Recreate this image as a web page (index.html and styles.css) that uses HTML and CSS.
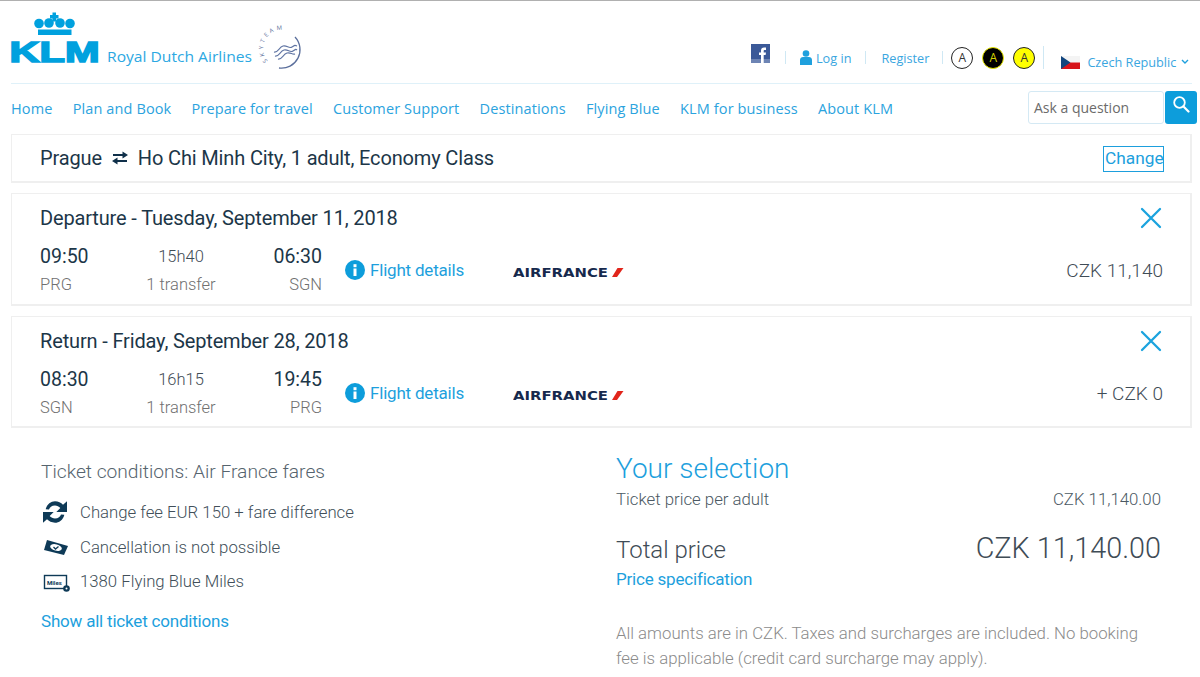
FILE: index.html
```html
<!DOCTYPE html>
<html lang="en">
<head>
<meta charset="utf-8">
<title>KLM - Your selection</title>
<link rel="stylesheet" href="styles.css">
</head>
<body>
<header class="top">
  <svg class="logo" width="292" height="64" viewBox="11 9 292 64">
    <g fill="#00a1de">
      <rect x="52.500" y="12.500" width="3.500" height="9"/><rect x="50" y="15" width="8.500" height="3.500"/>
      <circle cx="39" cy="23.500" r="4.800"/><circle cx="49" cy="23" r="4.800"/><circle cx="60" cy="23" r="4.800"/><circle cx="70" cy="23.500" r="4.800"/>
      <rect x="38" y="29.500" width="33.500" height="5.500"/>
      <text class="klm" x="9.500" y="62" textLength="90" lengthAdjust="spacingAndGlyphs">KLM</text>
      <text class="rda" x="107" y="62" textLength="145" lengthAdjust="spacingAndGlyphs">Royal Dutch Airlines</text>
    </g>
    <g class="skyteam">
      <path id="skyarc" d="M266 61 A18.500 18.500 0 0 1 294 36" fill="none"/>
      <text class="sky"><textPath href="#skyarc">SKYTEAM</textPath></text>
      <path d="M293 37 A18.500 18.500 0 0 1 277 68" fill="none" stroke="#5b6f9c" stroke-width="1.300"/>
      <g fill="none" stroke="#5f74a3" stroke-width="1.100">
        <path d="M272 52c4 1 5-5 9-6s6 3 9 1 3-2 5-1"/>
        <path d="M273 56c4 1 5-5 9-6s6 3 9 1 3-2 4-1"/>
        <path d="M276 59c4 1 5-5 9-6s5 2 8 1"/>
      </g>
    </g>
  </svg>
  <div class="util">
    <svg class="fb" width="19" height="19" viewBox="0 0 19 19"><rect width="19" height="19" fill="#3b5998"/><rect y="15" width="19" height="4" fill="#6d84b4"/><path d="M10 19v-8H8V8.500h2V6.500C10 4.500 11.200 3.500 13 3.500h2V6h-1.300c-.8 0-1 .4-1 1v1.500H15l-.4 2.500h-1.900v8z" fill="#fff"/></svg>
    <span class="sep"></span>
    <a class="ulink login"><svg width="12" height="15" viewBox="0 0 12 15"><circle cx="6" cy="3.500" r="3.300" fill="#1fa0dd"/><path d="M0 15V10c0-2 1.500-3 3-3h6c1.500 0 3 1 3 3v5z" fill="#1fa0dd"/></svg>Log in</a>
    <span class="sep sep-b"></span>
    <a class="ulink">Register</a>
    <span class="sep sep-c"></span>
    <span class="acc acc-w">A</span>
    <span class="acc acc-k">A</span>
    <span class="acc acc-y">A</span>
    <span class="sep sep-d"></span>
    <svg class="flag" width="19" height="13" viewBox="0 0 19 13"><rect width="19" height="6.500" fill="#f4f4f4"/><rect y="6.500" width="19" height="6.500" fill="#d7141a"/><path d="M0 0l9.500 6.500L0 13z" fill="#11457e"/></svg>
    <a class="ulink country">Czech Republic</a>
    <svg class="chev" width="8" height="5" viewBox="0 0 8 5"><path d="M1 1l3 3 3-3" fill="none" stroke="#1fa0dd" stroke-width="1.400"/></svg>
  </div>
</header>

<nav class="nav">
  <ul class="menu">
    <li>Home</li><li>Plan and Book</li><li>Prepare for travel</li><li>Customer Support</li><li>Destinations</li><li>Flying Blue</li><li>KLM for business</li><li>About KLM</li>
  </ul>
  <div class="search">
    <span class="sinput">Ask a question</span>
    <span class="sbtn"><svg width="18" height="18" viewBox="0 0 18 18"><circle cx="7.500" cy="7.500" r="5.300" fill="none" stroke="#fff" stroke-width="1.800"/><path d="M11.500 11.500l5 5" stroke="#fff" stroke-width="2.200" stroke-linecap="round"/></svg></span>
  </div>
</nav>

<main class="main">
  <section class="card summary">
    <div class="route">Prague
      <svg class="swap" width="18" height="18" viewBox="0 0 18 18"><path d="M2 6h10M16 12H6" fill="none" stroke="#10304a" stroke-width="2"/><path d="M11.500 2.500L17 6l-5.500 3.500zM6.500 8.500L1 12l5.500 3.500z" fill="#10304a"/></svg>
      Ho Chi Minh City, 1 adult, Economy Class</div>
    <a class="change">Change</a>
  </section>

  <section class="card flight">
    <div class="fhead"><h2>Departure - Tuesday, September 11, 2018</h2>
      <svg class="close" width="22" height="22" viewBox="0 0 22 22"><path d="M2 2l18 18M20 2L2 20" stroke="#1ba3de" stroke-width="2.300" stroke-linecap="round"/></svg></div>
    <div class="frow">
      <div class="col dep"><b>09:50</b><span>PRG</span></div>
      <div class="col dur"><i>15h40</i><span>1 transfer</span></div>
      <div class="col arr"><b>06:30</b><span>SGN</span></div>
      <a class="details"><svg width="20" height="20" viewBox="0 0 20 20"><circle cx="10" cy="10" r="10" fill="#0d9ddb"/><rect x="8.500" y="8.500" width="3" height="7.500" fill="#fff"/><rect x="8.500" y="4.200" width="3" height="3" fill="#fff"/></svg>Flight details</a>
      <svg class="af" width="111" height="12" viewBox="0 0 111 12"><text x="0" y="10" textLength="95" lengthAdjust="spacingAndGlyphs">AIRFRANCE</text><path d="M99 10L104.500 1H110.500L104 10z" fill="#e1251b"/></svg>
      <div class="price">CZK 11,140</div>
    </div>
  </section>

  <section class="card flight">
    <div class="fhead"><h2>Return - Friday, September 28, 2018</h2>
      <svg class="close" width="22" height="22" viewBox="0 0 22 22"><path d="M2 2l18 18M20 2L2 20" stroke="#1ba3de" stroke-width="2.300" stroke-linecap="round"/></svg></div>
    <div class="frow">
      <div class="col dep"><b>08:30</b><span>SGN</span></div>
      <div class="col dur"><i>16h15</i><span>1 transfer</span></div>
      <div class="col arr"><b>19:45</b><span>PRG</span></div>
      <a class="details"><svg width="20" height="20" viewBox="0 0 20 20"><circle cx="10" cy="10" r="10" fill="#0d9ddb"/><rect x="8.500" y="8.500" width="3" height="7.500" fill="#fff"/><rect x="8.500" y="4.200" width="3" height="3" fill="#fff"/></svg>Flight details</a>
      <svg class="af" width="111" height="12" viewBox="0 0 111 12"><text x="0" y="10" textLength="95" lengthAdjust="spacingAndGlyphs">AIRFRANCE</text><path d="M99 10L104.500 1H110.500L104 10z" fill="#e1251b"/></svg>
      <div class="price">+ CZK 0</div>
    </div>
  </section>

  <section class="bottom">
    <div class="conditions">
      <h3>Ticket conditions: Air France fares</h3>
      <ul class="clist">
        <li><svg width="24" height="24" viewBox="3 3 18 18"><path d="M5 10c1-4 4-6 7-6 2.500 0 4.500 1 6 2.500L21 4v8h-8l3-3c-1-1-2.500-1.800-4-1.800-2.500 0-4 1.300-4.500 3zM19 14c-1 4-4 6-7 6-2.500 0-4.500-1-6-2.500L3 20v-8h8l-3 3c1 1 2.500 1.800 4 1.800 2.500 0 4-1.300 4.500-3z" fill="#0e3a57"/></svg>Change fee EUR 150 + fare difference</li>
        <li><svg width="24" height="24" viewBox="0 0 24 24"><path d="M4 5l21 6-4 9-20-5z" fill="#0e3a57"/><ellipse cx="13" cy="12.500" rx="6" ry="3.200" fill="#fff" transform="rotate(15 13 12.500)"/><path d="M10.500 12l2 2 3-2.500" fill="none" stroke="#0e3a57" stroke-width="1.300"/></svg>Cancellation is not possible</li>
        <li><svg width="24" height="24" viewBox="0 0 24 24"><rect x="1.500" y="6.500" width="22" height="13" fill="#fff" stroke="#0e3a57" stroke-width="1.400"/><text class="miles" x="4" y="15.500">Miles</text><circle cx="23.500" cy="19.500" r="3.300" fill="#0e3a57"/><circle cx="23.500" cy="19.500" r="1" fill="#fff"/></svg>1380 Flying Blue Miles</li>
      </ul>
      <a class="more">Show all ticket conditions</a>
    </div>
    <div class="selection">
      <h3>Your selection</h3>
      <div class="line"><span>Ticket price per adult</span><span class="sm">CZK 11,140.00</span></div>
      <div class="total"><span>Total price</span><span class="big">CZK 11,140.00</span></div>
      <a class="spec">Price specification</a>
      <p class="note">All amounts are in CZK. Taxes and surcharges are included. No booking fee is applicable (credit card surcharge may apply).</p>
    </div>
  </section>
</main>
</body>
</html>
```
FILE: styles.css
```css
* { box-sizing: border-box; }
html, body { margin: 0; padding: 0; }
body {
  width: 1200px;
  height: 677px;
  overflow: hidden;
  background: #fff;
  border-top: 1px solid #b0b0b0;
  font-family: Roboto, "Liberation Sans", sans-serif;
  color: #1c3648;
}
a { color: #1d9fdd; }
ul { list-style: none; margin: 0; padding: 0; }
h2, h3, p { margin: 0; font-weight: 400; }

.top {
  height: 83px;
  margin: 0 8px 0 11px;
  border-bottom: 1px solid #dff1f9;
  display: flex;
  justify-content: space-between;
  align-items: flex-start;
  font-family: "Open Sans", sans-serif;
}
.logo { margin-top: 8px; display: block; overflow: visible; }
.klm { font: 900 29px "Liberation Sans", sans-serif; stroke: #00a1de; stroke-width: 1.600px; }
.rda { font: 400 14px "Open Sans", sans-serif; fill: #2ca8e2; }
.sky { font: 400 6px "Open Sans", sans-serif; fill: #5b6f9c; letter-spacing: 2.800px; }
.skyteam { transform: translate(2px, 0); }

.util { display: flex; align-items: center; height: 83px; width: 441px; padding-top: 30px; }
.fb { flex: none; margin-top: -8px; }
.sep { width: 1px; height: 13px; background: #cfe8f4; margin: 0 14px 0 15px; flex: none; }
.ulink { font-size: 12.700px; white-space: nowrap; color: #3aa6df; }
.login { display: flex; align-items: center; gap: 4px; }
.sep-b { margin: 0 15px 0 14px; }
.sep-c { margin: 0 8px 0 13px; }
.acc {
  width: 22px; height: 22px; border-radius: 50%;
  display: flex; align-items: center; justify-content: center;
  font: 400 12px "Open Sans", sans-serif;
  margin-right: 9px; flex: none;
}
.acc-w { border: 1px solid #222; color: #333; background: #fff; }
.acc-k { border: 1px solid #e5e500; background: #000; color: #d5d500; }
.acc-y { border: 1px solid #222; background: #ff0; color: #333; }
.sep-d { height: 23px; margin: 0 17px 0 -1px; }
.flag { flex: none; margin-top: 9px; }
.country { margin: 9px 0 0 7px; }
.chev { margin: 7px 0 0 5px; flex: none; }

.nav {
  margin: 0 3px 0 11px;
  height: 50px;
  display: flex;
  justify-content: space-between;
  align-items: flex-start;
  font-family: "Open Sans", sans-serif;
}
.menu { display: flex; gap: 20.200px; font-size: 14.500px; letter-spacing: 0.120px; color: #2ba3de; padding-top: 15px; line-height: 20px; }
.search { display: flex; gap: 1px; margin-top: 7px; }
.sinput {
  width: 136px; height: 33px;
  border: 1px solid #d4e9f4; border-radius: 3px;
  padding-left: 5px; font-size: 14px; line-height: 31px; color: #6b6b6b;
}
.sbtn {
  width: 32px; height: 33px; background: #0d9ddb; border-radius: 3px;
  display: flex; align-items: center; justify-content: center; padding-bottom: 8px;
}

.main { margin: 0 8px 0 11px; display: flex; flex-direction: column; gap: 10px; }
.card { border: 2px solid #efefef; border-width: 1px 2px 2px 1px; padding: 0 27px 0 28px; }
.summary { height: 49px; display: flex; align-items: center; justify-content: space-between; }
.route { font-size: 20px; letter-spacing: -0.150px; display: flex; align-items: center; gap: 9px; color: #1c3648; }
.change { border: 1px solid #1d9fdd; font-size: 17.300px; line-height: 22px; padding: 0 0 0 1px; width: 61px; margin: 1px -1px 0 0; height: 26px; white-space: nowrap; }
.flight { height: 113px; }
.flight + .flight { height: 112px; }
.fhead { display: flex; justify-content: space-between; padding-top: 12px; height: 48px; }
h2 { font-size: 20px; letter-spacing: -0.150px; line-height: 24px; }
.close { margin: 1px 1px 0 0; }
.frow { display: flex; align-items: center; padding-top: 2px; }
.col { display: flex; flex-direction: column; font-size: 16.500px; }
.col b { font-weight: 400; font-size: 19.500px; line-height: 26px; }
.col i { font-style: normal; font-size: 16.500px; font-weight: 300; line-height: 26px; color: #3f4c56; }
.col span { color: #707070; font-weight: 300; line-height: 28px; margin-top: 1px; }
.dep { width: 101px; }
.dur { width: 80px; align-items: center; }
.arr { width: 101px; align-items: flex-end; }
.details { display: flex; align-items: center; gap: 5px; font-size: 17px; margin: -4px 0 0 23px; width: 168px; letter-spacing: -0.200px; }
.af { flex: none; margin-top: 2px; }
.af text { font: 700 12px "DejaVu Sans", sans-serif; fill: #16294d; }
.price { margin: -2px 0 0 auto; font-size: 19px; font-weight: 300; color: #3f4c56; }

.bottom { display: flex; padding: 14px 31px 0 30px; justify-content: space-between; }
.conditions { width: 400px; padding-top: 8px; }
.conditions h3 { font-size: 19.200px; line-height: 24px; color: #56646e; font-weight: 300; }
.clist { margin-top: 16px; display: flex; flex-direction: column; gap: 10.500px; font-size: 16.750px; font-weight: 300; color: #414f59; }
.clist li { display: flex; align-items: center; gap: 13px; height: 24px; }
.clist svg { flex: none; margin-left: 2px; overflow: visible; }
.miles { font: 700 6px Roboto, sans-serif; fill: #0e3a57; }
.more { display: block; margin-top: 16px; font-size: 17px; line-height: 24px; letter-spacing: -0.200px; }

.selection { width: 545px; }
.selection h3 { font-size: 28px; line-height: 34px; color: #1d9fdd; font-weight: 300; }
.line { display: flex; justify-content: space-between; margin-top: 1px; font-size: 16.800px; line-height: 24px; color: #4b5963; font-weight: 300; }
.sm { font-size: 16.800px; }
.total { display: flex; justify-content: space-between; align-items: baseline; margin-top: 19px; font-size: 24px; line-height: 36px; color: #3f4c56; font-weight: 300; }
.big { font-size: 28.800px; }
.spec { display: block; font-size: 17px; line-height: 24px; margin-top: -1px; letter-spacing: -0.200px; }
.note { margin-top: 30px; font-size: 16.800px; line-height: 25px; color: #8b8b8b; font-weight: 300; }
```
